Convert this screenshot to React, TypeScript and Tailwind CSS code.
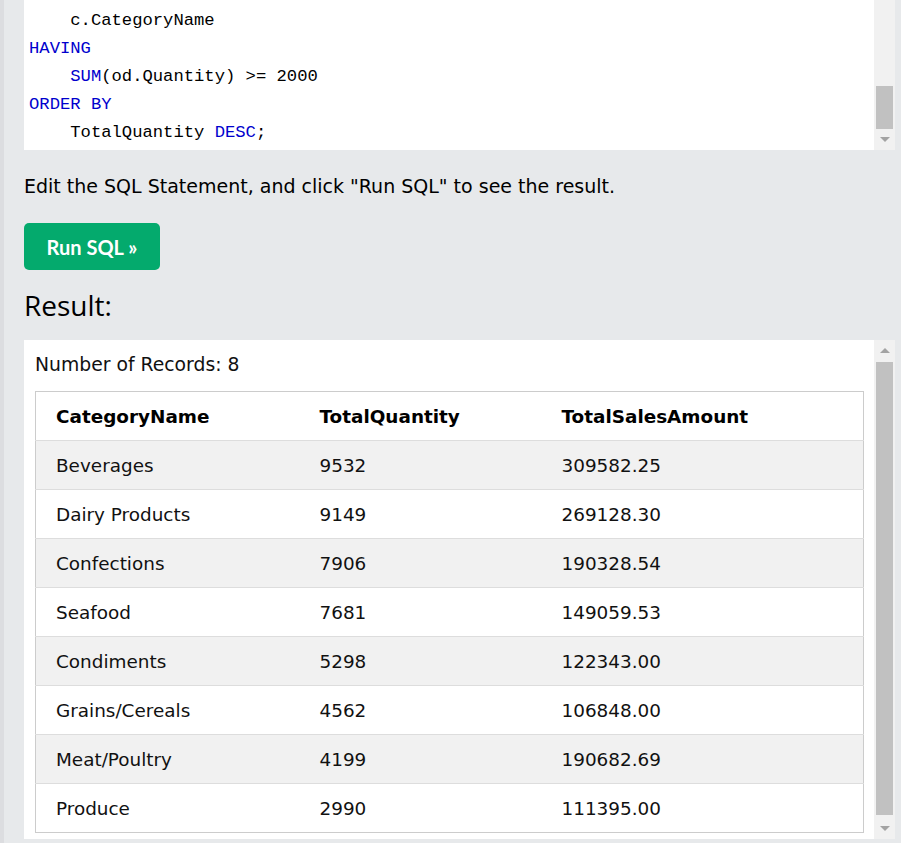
const rows = [
  ['Beverages', '9532', '309582.25'],
  ['Dairy Products', '9149', '269128.30'],
  ['Confections', '7906', '190328.54'],
  ['Seafood', '7681', '149059.53'],
  ['Condiments', '5298', '122343.00'],
  ['Grains/Cereals', '4562', '106848.00'],
  ['Meat/Poultry', '4199', '190682.69'],
  ['Produce', '2990', '111395.00'],
]

const kw = 'text-[#0000cd]'

function Scrollbar({
  thumbTop,
  thumbHeight,
  upArrow = true,
}: {
  thumbTop: number
  thumbHeight: number
  upArrow?: boolean
}) {
  return (
    <div className="relative w-[21px] shrink-0 bg-[#f1f1f1]">
      {upArrow && (
        <div className="absolute left-1/2 top-[8px] -translate-x-1/2 w-0 h-0 border-l-[5px] border-r-[5px] border-b-[5px] border-l-transparent border-r-transparent border-b-[#a3a3a3]" />
      )}
      <div
        className="absolute left-[2px] right-[2px] bg-[#c1c1c1]"
        style={{ top: thumbTop, height: thumbHeight }}
      />
      <div className="absolute left-1/2 bottom-[8px] -translate-x-1/2 w-0 h-0 border-l-[5px] border-r-[5px] border-t-[5px] border-l-transparent border-r-transparent border-t-[#a3a3a3]" />
    </div>
  )
}

export default function App() {
  return (
    <div className="w-[901px] h-[843px] overflow-hidden bg-[#e7e9eb] border-l-[4px] border-[#dcdde0] pl-[20px] pr-[6px] font-['DejaVu_Sans',sans-serif] text-black">
      {/* code editor (scrolled to the bottom) */}
      <div className="flex h-[150px] bg-white">
        <pre className="flex-1 pt-[7px] pl-[5px] font-['Liberation_Mono',monospace] text-[17.2px] leading-[28px] text-black">
{'    c.CategoryName\n'}
          <span className={kw}>HAVING</span>
{'\n    '}
          <span className={kw}>SUM</span>
{'(od.Quantity) >= 2000\n'}
          <span className={kw}>ORDER BY</span>
{'\n    TotalQuantity '}
          <span className={kw}>DESC</span>;
        </pre>
        <Scrollbar thumbTop={86} thumbHeight={43} upArrow={false} />
      </div>

      <p className="mt-[24px] text-[19px] leading-[24px]">
        Edit the SQL Statement, and click "Run SQL" to see the result.
      </p>

      <button className="mt-[25px] h-[47px] w-[136px] rounded-[5px] bg-[#04aa6d] text-white text-[20px] font-bold font-['Lato','Open_Sans',sans-serif]">
        Run SQL »
      </button>

      <h2 className="mt-[14px] h-[56px] text-[28px] leading-[42px] font-['Open_Sans','Noto_Sans',sans-serif]">
        Result:
      </h2>

      <div className="flex h-[499px] bg-white">
        <div className="flex-1 pl-[11px] pr-[10px]">
          <div className="h-[51px] pt-[13px] text-[18.8px] leading-[24px] text-[#111]">
            Number of Records: 8
          </div>
          <table className="w-full border border-[#cccccc] border-collapse text-[18.4px]">
            <thead>
              <tr className="h-[49px]">
                <th className="w-[264px] pl-[20px] pt-[2px] text-left font-bold">CategoryName</th>
                <th className="w-[242px] pl-[20px] pt-[2px] text-left font-bold">TotalQuantity</th>
                <th className="pl-[20px] pt-[2px] text-left font-bold">TotalSalesAmount</th>
              </tr>
            </thead>
            <tbody>
              {rows.map((r, i) => (
                <tr
                  key={i}
                  className={`h-[49px] border-t border-[#dddddd] ${i % 2 === 0 ? 'bg-[#f1f1f1]' : 'bg-white'}`}
                >
                  {r.map((c, j) => (
                    <td key={j} className="pl-[20px] pt-[2px] text-[#111]">
                      {c}
                    </td>
                  ))}
                </tr>
              ))}
            </tbody>
          </table>
        </div>
        <Scrollbar thumbTop={22} thumbHeight={453} />
      </div>
    </div>
  )
}
